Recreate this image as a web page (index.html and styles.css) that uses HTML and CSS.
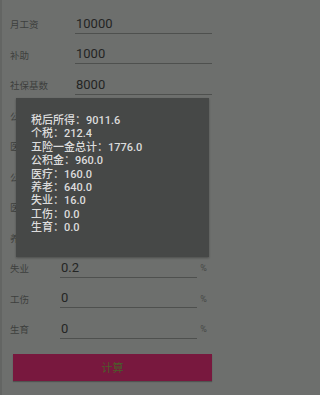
FILE: index.html
```html
<!DOCTYPE html>
<html lang="zh">
<head>
<meta charset="utf-8">
<link rel="stylesheet" href="styles.css">
</head>
<body>
<div class="screen">
  <div class="form">
    <div class="row"><span class="label wide">月工资</span><span class="field">10000</span></div>
    <div class="row"><span class="label wide">补助</span><span class="field">1000</span></div>
    <div class="row"><span class="label wide">社保基数</span><span class="field">8000</span></div>
    <div class="row pctrow"><span class="label">公积金</span><span class="field">12</span><span class="pct">%</span></div>
    <div class="row pctrow"><span class="label">医疗</span><span class="field">2</span><span class="pct">%</span></div>
    <div class="row pctrow"><span class="label">公积金</span><span class="field">8</span><span class="pct">%</span></div>
    <div class="row pctrow"><span class="label">医疗</span><span class="field">2</span><span class="pct">%</span></div>
    <div class="row pctrow"><span class="label">养老</span><span class="field">8</span><span class="pct">%</span></div>
    <div class="row pctrow"><span class="label">失业</span><span class="field">0.2</span><span class="pct">%</span></div>
    <div class="row pctrow"><span class="label">工伤</span><span class="field">0</span><span class="pct">%</span></div>
    <div class="row pctrow"><span class="label">生育</span><span class="field">0</span><span class="pct">%</span></div>
    <div class="btn">计算</div>
  </div>
  <div class="dialog">
    <div class="line">税后所得：9011.6</div>
    <div class="line">个税：212.4</div>
    <div class="line">五险一金总计：1776.0</div>
    <div class="line">公积金：960.0</div>
    <div class="line">医疗：160.0</div>
    <div class="line">养老：640.0</div>
    <div class="line">失业：16.0</div>
    <div class="line">工伤：0.0</div>
    <div class="line">生育：0.0</div>
  </div>
</div>
</body>
</html>
```
FILE: styles.css
```css
html, body {
  margin: 0;
  padding: 0;
  background: #6d6f6d;
}
body {
  font-family: "Roboto", "Noto Sans CJK SC", sans-serif;
}
.screen {
  position: relative;
  width: 220px;
  height: 395px;
  overflow: hidden;
  background: #6d6f6d;
  box-shadow: inset 2px 0 0 #636563;
}
.form {
  padding-top: 9px;
  display: flex;
  flex-direction: column;
}
.row {
  display: flex;
  align-items: center;
  height: 30.5px;
  padding: 0 8px 0 10px;
}
.label {
  width: 50px;
  font-size: 9.5px;
  color: #3d3f3d;
  flex: none;
}
.label.wide {
  width: 65px;
}
.field {
  flex: 1;
  height: 18px;
  line-height: 18px;
  border-bottom: 1.5px solid #4e504e;
  font-size: 13px;
  color: #242524;
  padding-left: 1px;
}
.pctrow {
  padding-right: 10px;
}
.pct {
  width: 13px;
  text-align: center;
  font-size: 9px;
  color: #464846;
  flex: none;
}
.btn {
  margin: 9px 8px 0 13px;
  height: 27px;
  background: #78183e;
  color: #4b5e2a;
  font-size: 11px;
  display: flex;
  align-items: center;
  justify-content: center;
  box-shadow: 0 1px 1px rgba(0,0,0,0.25);
}
.dialog {
  position: absolute;
  left: 16px;
  top: 98px;
  width: 193px;
  height: 159px;
  box-sizing: border-box;
  padding: 16px 0 0 15px;
  background: #464847;
  box-shadow: 0 1px 2px rgba(0,0,0,0.3);
}
.line {
  font-size: 11px;
  font-weight: 500;
  line-height: 13.4px;
  color: #dcdcdc;
  white-space: nowrap;
}
```
